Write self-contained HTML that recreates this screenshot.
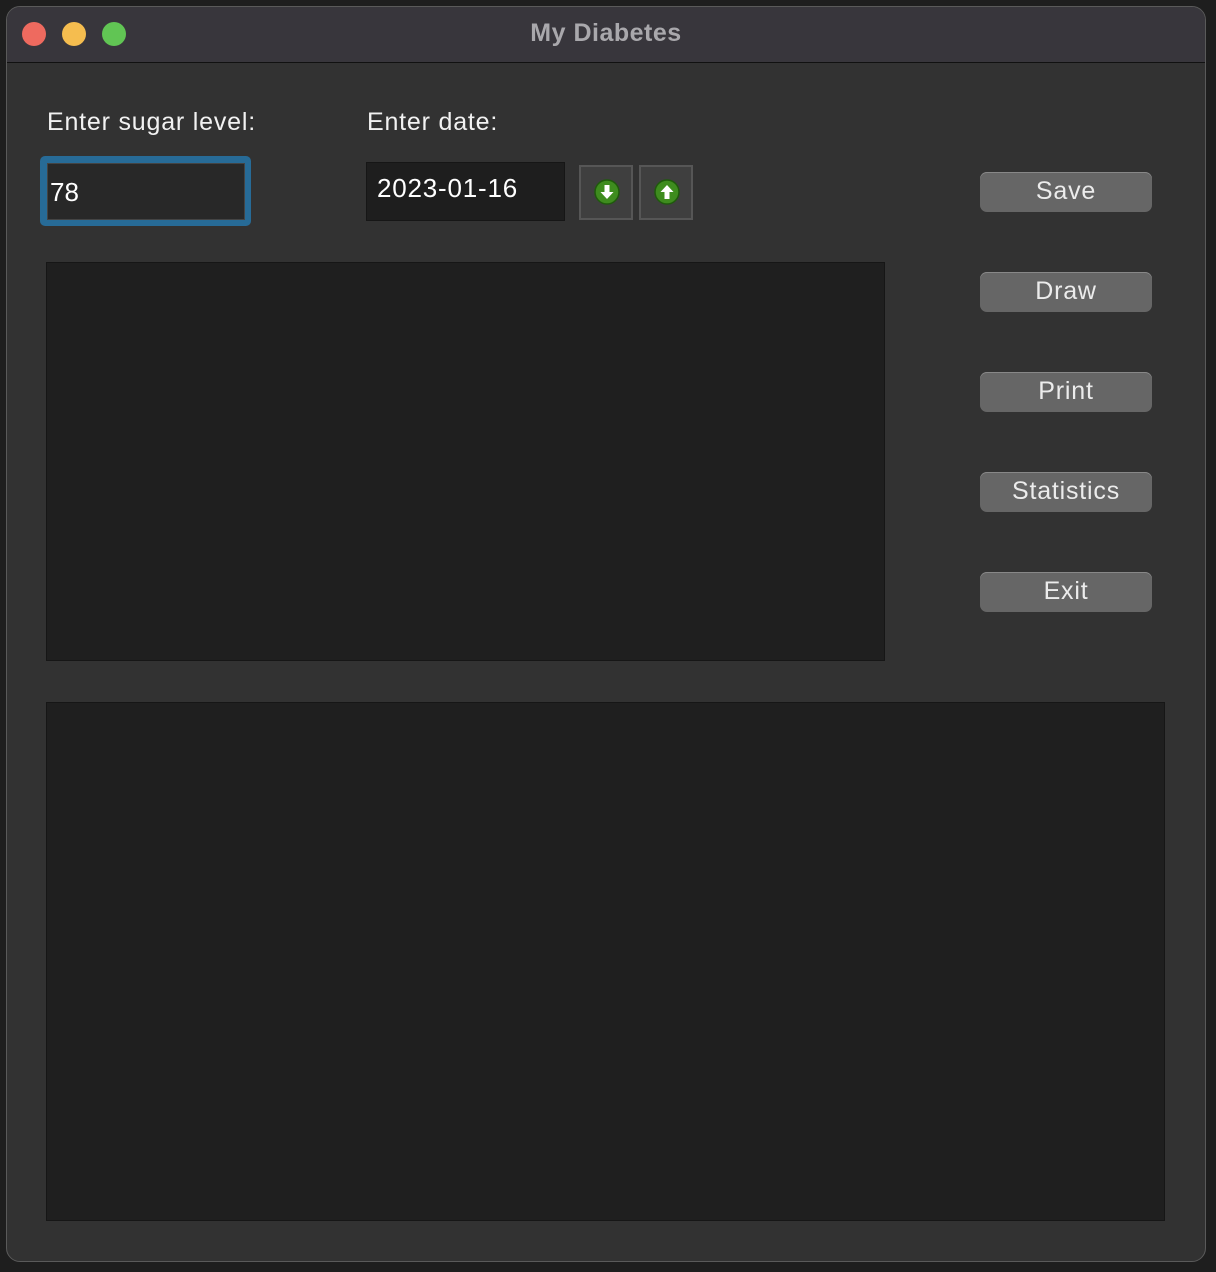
<!DOCTYPE html>
<html><head><meta charset="utf-8"><style>
html,body{margin:0;padding:0;width:1216px;height:1272px;background:#1e1e1e;overflow:hidden;font-family:"Liberation Sans",sans-serif;}
.win{position:absolute;left:6px;top:6px;width:1200px;height:1256px;background:#323232;border-radius:14px;border:1px solid #5a5a5a;box-sizing:border-box;overflow:hidden;}
.tb{position:absolute;left:0;top:0;width:100%;height:55px;background:#38363c;border-bottom:1px solid #111;}
.dot{position:absolute;top:15px;width:24px;height:24px;border-radius:50%;}
.title{position:absolute;left:0;right:0;top:0;line-height:52px;text-align:center;color:#a9a8ac;font-weight:bold;font-size:25px;letter-spacing:0.5px;}
.lbl{position:absolute;color:#f2f2f2;font-size:25px;letter-spacing:0.8px;}
.box{position:absolute;background:#1f1f1f;border:1px solid #161616;box-sizing:border-box;}
.btn{position:absolute;left:973px;width:172px;height:40px;background:#666;border-radius:7px;color:#ececec;font-size:25px;text-align:center;line-height:38px;box-shadow:0 1px 0 #888 inset;letter-spacing:0.8px;}
.ib{position:absolute;top:158px;width:54px;height:55px;background:#3f3f3f;border:2px solid #565656;box-sizing:border-box;}
.ib svg{position:absolute;left:12px;top:11px;}
</style></head><body>
<div class="win">
<div class="tb"><div class="dot" style="left:15px;background:#ee6a5f"></div><div class="dot" style="left:55px;background:#f5bd4f"></div><div class="dot" style="left:95px;background:#61c554"></div><div class="title">My Diabetes</div></div>
<div class="lbl" style="left:40px;top:101px">Enter sugar level:</div>
<div class="lbl" style="left:360px;top:101px">Enter date:</div>
<div style="position:absolute;left:33px;top:149px;width:211px;height:70px;background:#276b97;border-radius:5px;"></div>
<div style="position:absolute;left:40px;top:156px;width:198px;height:57px;background:#282828;border:1px solid #444;box-sizing:border-box;color:#fff;font-size:26px;line-height:56px;padding-left:2px">78</div>
<div class="box" style="left:359px;top:155px;width:199px;height:59px;color:#fff;font-size:26px;padding-left:10px;line-height:50px;background:#1e1e1e;letter-spacing:0.8px">2023-01-16</div>
<div class="ib" style="left:572px"><svg width="28" height="28" viewBox="0 0 28 28"><circle cx="14" cy="14" r="12" fill="#3e8c1e" stroke="#1f5a0c" stroke-width="1.5"/><path d="M11.5 7h5v7h4l-6.5 7-6.5-7h4z" fill="#fff"/></svg></div>
<div class="ib" style="left:632px"><svg width="28" height="28" viewBox="0 0 28 28"><circle cx="14" cy="14" r="12" fill="#3e8c1e" stroke="#1f5a0c" stroke-width="1.5"/><path d="M11.5 21h5v-7h4l-6.5-7-6.5 7h4z" fill="#fff"/></svg></div>
<div class="btn" style="top:165px">Save</div>
<div class="btn" style="top:265px">Draw</div>
<div class="btn" style="top:365px">Print</div>
<div class="btn" style="top:465px">Statistics</div>
<div class="btn" style="top:565px">Exit</div>
<div class="box" style="left:39px;top:255px;width:839px;height:399px"></div>
<div class="box" style="left:39px;top:695px;width:1119px;height:519px"></div>
</div>
</body></html>
